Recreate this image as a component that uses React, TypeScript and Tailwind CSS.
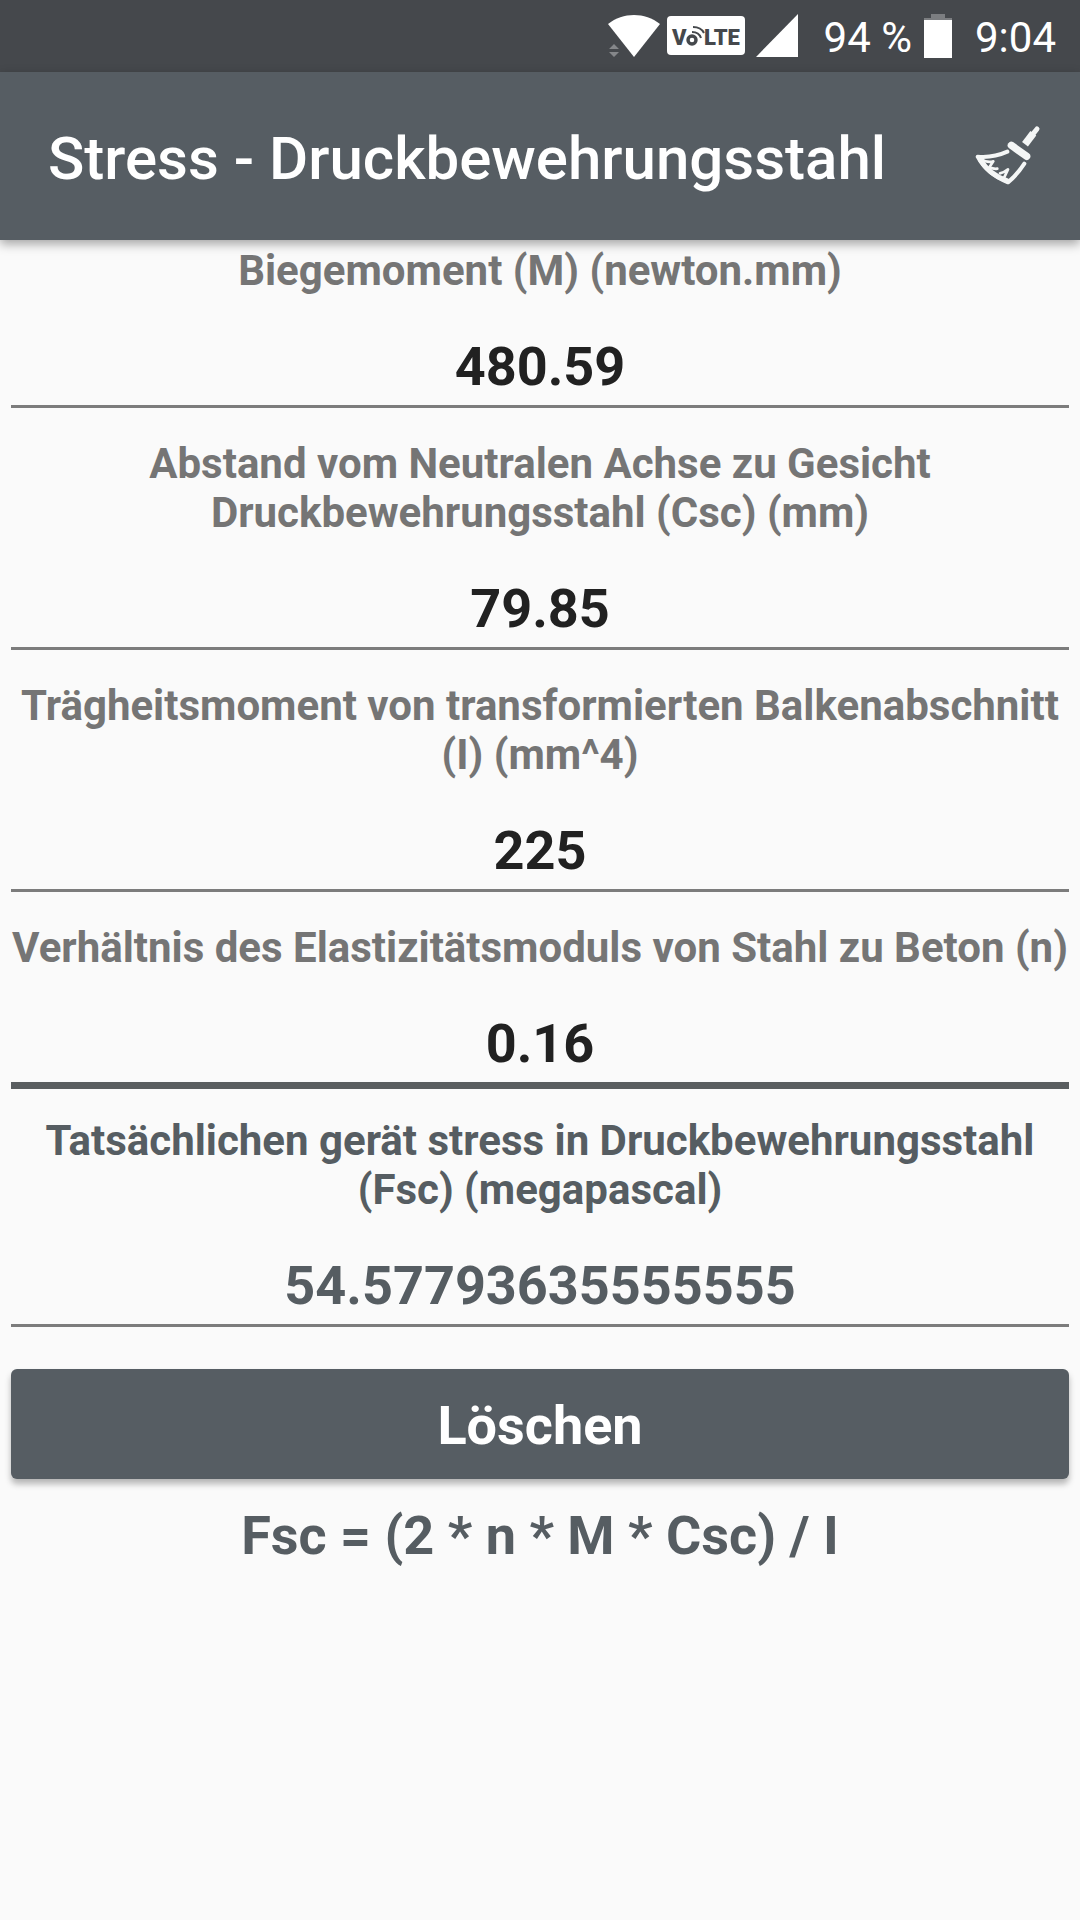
import { useState } from 'react'

const FIELDS = [
  { id: 'm', label: 'Biegemoment (M) (newton.mm)', value: '480.59' },
  { id: 'csc', label: 'Abstand vom Neutralen Achse zu Gesicht Druckbewehrungsstahl (Csc) (mm)', value: '79.85' },
  { id: 'i', label: 'Trägheitsmoment von transformierten Balkenabschnitt (I) (mm^4)', value: '225' },
  { id: 'n', label: 'Verhältnis des Elastizitätsmoduls von Stahl zu Beton (n)', value: '0.16', active: true },
  { id: 'fsc', label: 'Tatsächlichen gerät stress in Druckbewehrungsstahl (Fsc) (megapascal)', value: '54.57793635555555', result: true },
]

function StatusBar() {
  return (
    <div className="flex h-[72px] items-center justify-end bg-[#45484c] pr-6 text-[42px] leading-[50px] text-white">
      <svg className="mr-[7px] h-11 w-[52px]" viewBox="0 0 52 44" fill="#fff">
        <path d="M0 10C15-2 37-2 52 10L26 43Z" />
        <path d="M1 35L6 30L11 35ZM1 38L6 43L11 38Z" fill="#85878a" />
      </svg>
      <svg className="mr-[11px] h-10 w-[78px]" viewBox="0 0 78 40">
        <rect width="78" height="39" rx="4" fill="#fff" />
        <g fill="#45484c" fontFamily="Roboto, sans-serif" fontWeight="900" fontSize="22">
          <text x="5" y="29">V</text>
          <text x="37" y="29">LTE</text>
        </g>
        <g fill="none" stroke="#45484c">
          <circle cx="25" cy="24" r="4" strokeWidth="3.4" />
          <path d="M25 16Q32 16 34 22M26 11Q34 11 37 17" strokeWidth="2" />
        </g>
      </svg>
      <svg className="mr-[26px] h-11 w-[42px]" viewBox="0 0 42 44" fill="#fff">
        <path d="M42 0V43H0Z" />
      </svg>
      <span className="pt-1">94 %</span>
      <svg className="ml-3 mr-[23px] h-11 w-7" viewBox="0 0 28 44">
        <path d="M7 0H21V4H28V7H0V4H7Z" fill="#7c7e81" />
        <path d="M0 6H28V44H0Z" fill="#fff" />
      </svg>
      <span className="pt-1">9:04</span>
    </div>
  )
}

function BroomIcon() {
  return (
    <svg className="h-16 w-[72px]" viewBox="66 72 216 192" fill="none" stroke="#f4f6f6" strokeLinecap="round" strokeLinejoin="round">
      <path d="M261 87L248 103" strokeWidth="15" />
      <path d="M250 100L225 133" strokeWidth="22" strokeLinecap="butt" />
      <path d="M184 136L230 169" strokeWidth="22" />
      <path d="M172 155Q130 174 83 170Q110 222 174 247Q200 226 223 191" strokeWidth="12" />
      <path d="M90 176Q112 190 130 184L118 202Q132 208 142 206M150 220Q162 218 174 208L160 238" strokeWidth="8" />
      <path d="M92 180Q116 222 170 242" strokeWidth="15" />
    </svg>
  )
}

export default function App() {
  const [values, setValues] = useState(FIELDS.map(f => f.value))
  const clear = () => setValues(FIELDS.map(() => ''))

  return (
    <div className="min-h-screen bg-[#fafafa] font-['Roboto',sans-serif]">
      <StatusBar />
      <header className="flex h-[168px] items-center justify-between bg-[#565d63] pl-12 pr-9 shadow-[0_4px_10px_rgba(0,0,0,0.35)]">
        <h1 className="pt-1.5 text-[60px] font-medium leading-[70px] text-white">Stress - Druckbewehrungsstahl</h1>
        <button type="button" aria-label="Löschen" onClick={clear}>
          <BroomIcon />
        </button>
      </header>

      <main className="px-[11px] pt-1.5 text-center font-bold">
        {FIELDS.map((f, i) => (
          <div key={f.id} className="pb-[27px]">
            <label htmlFor={f.id} className={`-mx-1 block text-[42px] leading-[49px] ${f.result ? 'text-[#565d62]' : 'text-[#757575]'}`}>
              {f.label}
            </label>
            <input
              id={f.id}
              value={values[i]}
              readOnly={f.result}
              onChange={e => setValues(values.map((v, j) => (j === i ? e.target.value : v)))}
              className={`block h-[118px] w-full pt-[25px] text-center text-[54px] outline-none ${f.result ? 'text-[#565d62]' : 'text-[#212121]'}`}
            />
            <div className={f.active ? '-mt-2 h-[7px] bg-[#5a5e60]' : '-mt-2 mb-1 h-[3px] bg-[#7c7c7c]'} />
          </div>
        ))}
        <button
          type="button"
          onClick={clear}
          className="mt-[11px] block h-[110px] w-full rounded-md bg-[#565d63] pt-0.5 text-[54px] leading-[63px] text-white shadow-[0_5px_6px_rgba(0,0,0,0.28)]"
        >
          Löschen
        </button>
        <p className="mt-[25px] text-[54px] leading-[63px] text-[#565d62]">Fsc = (2 * n * M * Csc) / I</p>
      </main>
    </div>
  )
}
